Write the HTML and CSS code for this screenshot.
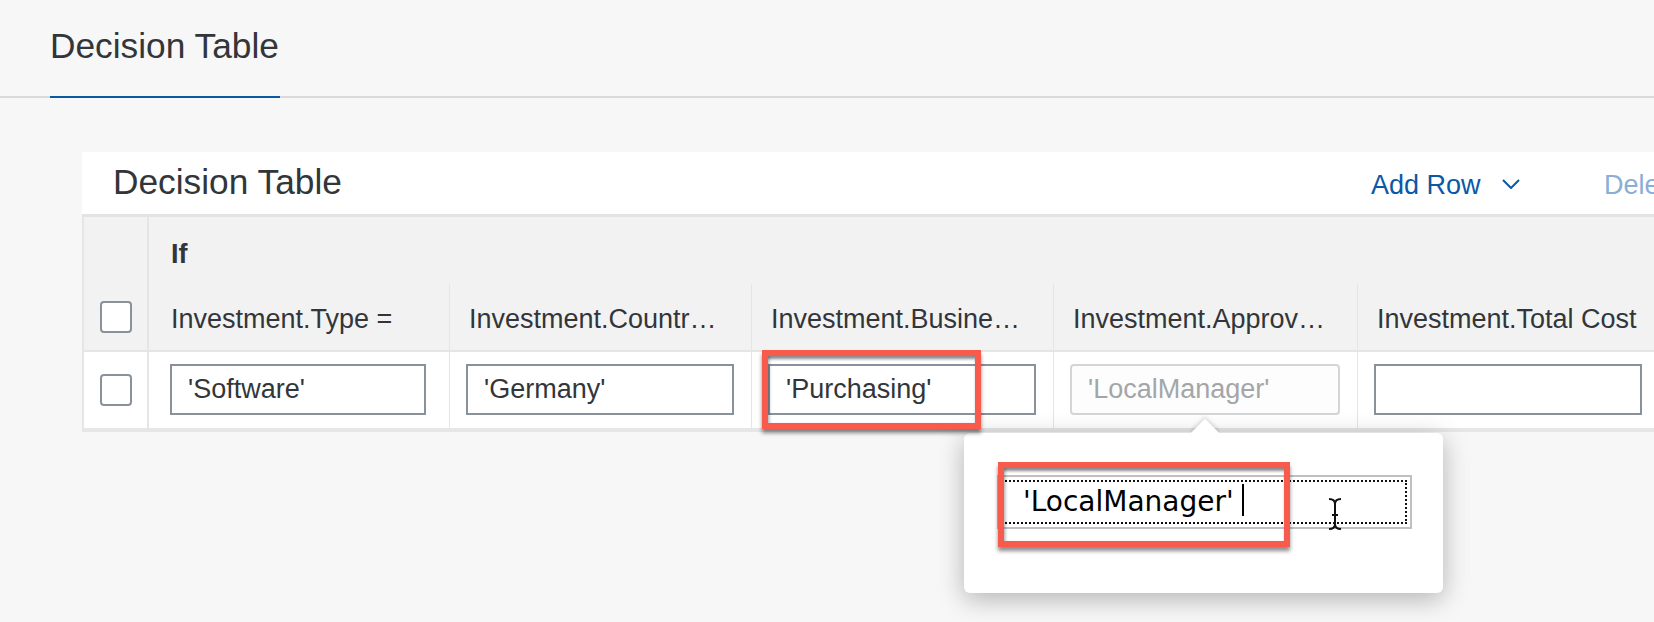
FILE: index.html
```html
<!DOCTYPE html>
<html lang="en">
<head>
<meta charset="utf-8">
<title>Decision Table</title>
<link rel="stylesheet" href="styles.css">
</head>
<body>
<header class="app-header">
  <div class="tab"><h1 class="tab-title">Decision Table</h1></div>
</header>
<main class="content">
  <section class="card">
    <div class="toolbar">
      <h2 class="card-title">Decision Table</h2>
      <div class="actions">
        <span class="action primary">Add Row <svg class="chev" width="18" height="10" viewBox="0 0 18 10"><path d="M1 1 L9 9 L17 1" fill="none" stroke="#0a58a6" stroke-width="2"/></svg></span>
        <span class="action disabled">Delete Row</span>
      </div>
    </div>
    <div class="dt">
      <div class="cb-head"><span class="checkbox"></span></div>
      <div class="if-cell">If</div>
      <div class="hd first">Investment.Type =</div>
      <div class="hd">Investment.Countr…</div>
      <div class="hd">Investment.Busine…</div>
      <div class="hd">Investment.Approv…</div>
      <div class="hd">Investment.Total Cost</div>
      <div class="cb-cell"><span class="checkbox"></span></div>
      <div class="dc first"><div class="field">'Software'</div></div>
      <div class="dc"><div class="field">'Germany'</div></div>
      <div class="dc"><div class="field">'Purchasing'</div></div>
      <div class="dc"><div class="field ro">'LocalManager'</div></div>
      <div class="dc"><div class="field"></div></div>
    </div>
  </section>
</main>
<div class="popover">
  <div class="pop-input"><span class="pop-text">'LocalManager'</span><span class="caret"></span></div>
</div>
<div class="mark mark-1"></div>
<div class="mark mark-2"></div>
<svg class="ibeam" width="16" height="34" viewBox="0 0 16 34"><path d="M2 2 Q8 2 8 7 Q8 2 14 2 M8 7 V27 Q8 32 2 32 M8 27 Q8 32 14 32 M5 18 H11" fill="none" stroke="#111" stroke-width="2"/></svg>
</body>
</html>
```

FILE: styles.css
```css
* { box-sizing: border-box; }
html, body { margin: 0; padding: 0; }
body {
  width: 1654px;
  height: 622px;
  overflow: hidden;
  background: #f7f7f7;
  font-family: "Liberation Sans", Arial, sans-serif;
  color: #32363a;
}
.app-header {
  height: 98px;
  border-bottom: 2px solid #d9d9d9;
  padding-left: 50px;
}
.tab {
  display: inline-block;
  height: 98px;
  padding-top: 26px;
  border-bottom: 2px solid #0a57a4;
  width: 230px;
}
.tab-title {
  margin: 0;
  font-weight: normal;
  font-size: 35.3px;
  line-height: 40px;
  white-space: nowrap;
}
.content {
  padding: 54px 0 0 82px;
}
.card {
  width: 1700px;
  background: #fff;
}
.toolbar {
  display: flex;
  align-items: baseline;
  height: 62px;
  padding: 10px 0 0 31px;
}
.card-title {
  margin: 0;
  flex: 0 0 1258px;
  font-weight: normal;
  font-size: 35.3px;
  line-height: 40px;
}
.actions {
  display: flex;
  align-items: baseline;
  gap: 84px;
  white-space: nowrap;
}
.action {
  font-size: 27px;
  line-height: 40px;
}
.action.primary { color: #0a58a6; }
.action.disabled { color: #8aaed6; }
.chev {
  margin-left: 14px;
  vertical-align: 5px;
}
.dt {
  display: grid;
  grid-template-columns: 63px 302px 302px 302px 304px 302px;
  width: max-content;
  border-left: 2px solid #e5e5e5;
  border-top: 3px solid #e3e3e3;
  border-bottom: 4px solid #e6e6e6;
}
.cb-head {
  grid-row: span 2;
  background: #f2f2f2;
  border-bottom: 2px solid #e5e5e5;
  display: flex;
  align-items: flex-end;
  justify-content: center;
  padding-bottom: 17px;
}
.if-cell {
  grid-column: span 5;
  background: #f2f2f2;
  border-left: 2px solid #e5e5e5;
  font-weight: bold;
  font-size: 27px;
  line-height: 30px;
  padding: 22px 0 15px 22px;
}
.hd {
  background: #f2f2f2;
  border-left: 1px solid #e5e5e5;
  border-bottom: 2px solid #e5e5e5;
  font-size: 27px;
  line-height: 30px;
  padding: 20px 0 16px 19px;
  white-space: nowrap;
  overflow: hidden;
}
.hd.first {
  border-left: 2px solid #e5e5e5;
  padding-left: 22px;
}
.cb-cell {
  display: flex;
  align-items: center;
  justify-content: center;
}
.checkbox {
  display: block;
  width: 32px;
  height: 32px;
  border: 2px solid #89919a;
  border-radius: 4px;
  background: #fff;
}
.dc {
  border-left: 1px solid #e5e5e5;
  padding: 12px 17px 13px 16px;
}
.dc.first {
  border-left: 2px solid #e5e5e5;
  padding: 12px 23px 13px 21px;
}
.field {
  height: 51px;
  border: 2px solid #89919a;
  background: #fff;
  font-size: 27px;
  line-height: 47px;
  padding-left: 16px;
  white-space: nowrap;
  overflow: hidden;
}
.field.ro {
  border-color: #d3d5d7;
  border-radius: 4px;
  color: #a3a6a9;
  background: #fdfdfd;
}
.popover {
  position: absolute;
  left: 964px;
  top: 433px;
  width: 479px;
  height: 160px;
  background: #fff;
  border-radius: 6px;
  box-shadow: 0 6px 26px rgba(0, 0, 0, 0.28);
  padding: 42px 0 0 33px;
}
.popover::before {
  content: "";
  position: absolute;
  left: 231px;
  top: -10px;
  width: 20px;
  height: 20px;
  background: #fff;
  transform: rotate(45deg);
  box-shadow: -2px -2px 4px rgba(0, 0, 0, 0.12);
}
.pop-input {
  position: relative;
  width: 415px;
  height: 54px;
  border: 2px solid #c0c0c0;
  outline: 2px dotted #111;
  outline-offset: -7px;
  background: #fff;
  padding-left: 24px;
  font-family: "DejaVu Sans", "Liberation Sans", sans-serif;
  font-size: 28px;
  line-height: 50px;
  color: #000;
  white-space: nowrap;
}
.caret {
  display: inline-block;
  width: 2px;
  height: 32px;
  background: #000;
  margin-left: 8px;
  vertical-align: -5px;
}
.mark {
  position: absolute;
  border: 6px solid #f85a4c;
  box-shadow: 0 4px 4px rgba(0, 0, 0, 0.45), inset 0 4px 3px -1px rgba(0, 0, 0, 0.45), inset 3px 0 3px -1px rgba(0, 0, 0, 0.2);
}
.mark-1 {
  left: 762px;
  top: 350px;
  width: 219px;
  height: 79px;
}
.mark-2 {
  left: 998px;
  top: 462px;
  width: 292px;
  height: 85px;
}
.ibeam {
  position: absolute;
  left: 1327px;
  top: 497px;
}
```
